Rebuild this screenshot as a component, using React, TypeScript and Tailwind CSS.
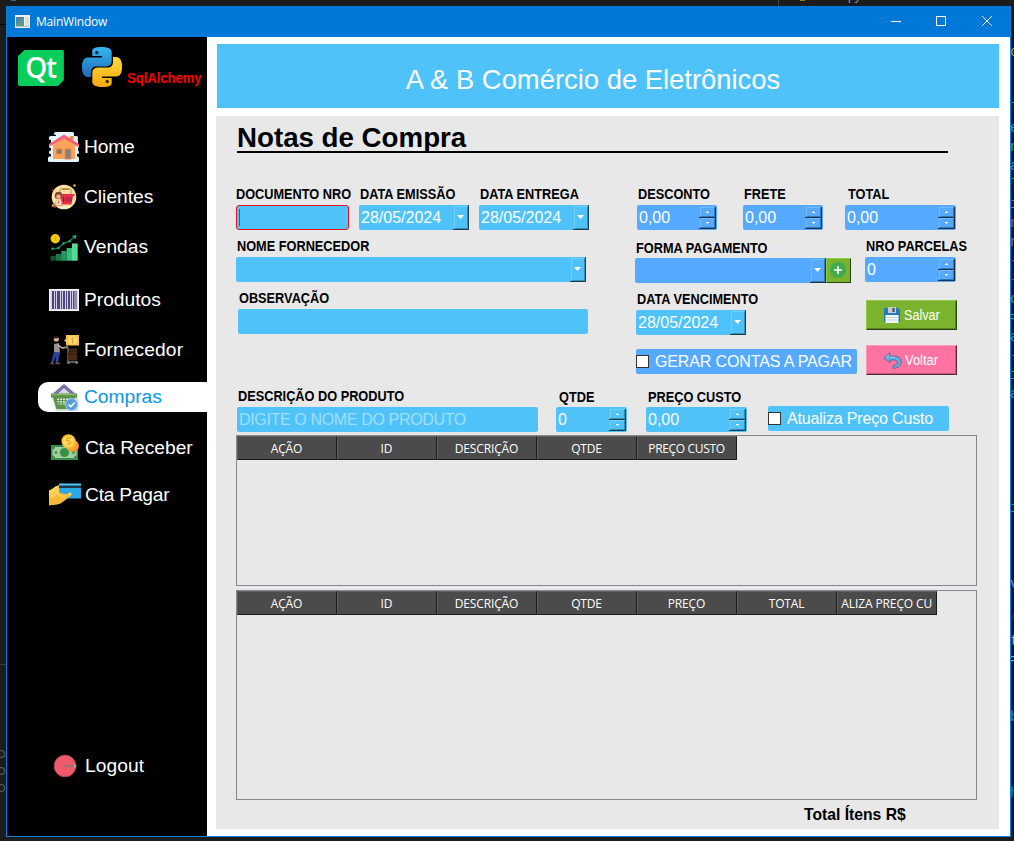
import React from "react";

const SANS = "font-['Liberation_Sans',Arial,sans-serif]";
const UI = "font-['Open_Sans','Noto_Sans',sans-serif]";

/* ---------- navigation icons ---------- */

function HomeIcon() {
  return (
    <svg width="32" height="30" viewBox="0 0 32 30">
      <g fill="#e3f4fb">
        <rect x="6" y="0" width="20" height="3" rx="1.5" />
        <rect x="8" y="2" width="18" height="4" rx="1" />
        <rect x="1" y="4" width="29" height="4" rx="1.5" />
        <rect x="3" y="8" width="27" height="5" />
        <rect x="1" y="12.500" width="30" height="3.500" rx="1.5" />
        <rect x="3" y="16" width="27" height="3" />
        <rect x="1" y="18.500" width="30" height="3.500" rx="1.5" />
        <rect x="3" y="22" width="26" height="3" />
        <rect x="0" y="24.500" width="31" height="5.500" rx="1.5" />
      </g>
      <rect x="22" y="4" width="3.5" height="7" fill="#f78b37" />
      <path d="M5 13 16 5l11 8v14H5z" fill="#fda45b" />
      <path d="M1.5 14.5 1 12 16 2.5 31 12l-.8 3L16 6.5z" fill="#fb5f7c" />
      <rect x="8.5" y="17" width="5.5" height="5" fill="#787878" stroke="#ed8c43" />
      <rect x="17" y="17" width="6" height="10" fill="#818181" stroke="#ed8c43" />
    </svg>
  );
}

function ClientesIcon() {
  return (
    <svg width="32" height="30" viewBox="0 0 32 30">
      <circle cx="16" cy="15" r="12.3" fill="#fcdfa2" />
      <path d="M9 25c5 3 12 2 15-1z" fill="#fff0cd" />
      <rect x="13.5" y="6" width="8" height="2" rx="1" fill="#c1903d" />
      <path d="M12 13V7h1.5M23 13V7h-1.5" stroke="#a47b4c" fill="none" strokeWidth=".7" />
      <path d="M12 12h14.5v2H25l-1.5 8.5H14L12 14z" fill="#e5324b" />
      <path d="M15.5 15v5M18 15v5M20.5 15v5M23 15v5" stroke="#a81732" />
      <circle cx="10.5" cy="13.5" r="3.8" fill="#874536" />
      <circle cx="10.5" cy="14.8" r="2.3" fill="#e9b090" />
      <path d="M6.5 24c0-5 2-6 4-6s4 1 4 6z" fill="#f29b62" />
      <rect x="8.5" y="18.5" width="4.5" height="4.5" fill="#fff3df" />
      <path d="M10.8 19v3" stroke="#d14343" />
      <circle cx="26.5" cy="3.5" r="1.3" fill="#edaa21" />
      <circle cx="4.5" cy="8" r="1" fill="#b61e3b" />
      <circle cx="5" cy="23.5" r="1.3" fill="#e9a735" />
      <circle cx="7" cy="25" r="1" fill="#c22c43" />
    </svg>
  );
}

function VendasIcon() {
  return (
    <svg width="32" height="30" viewBox="0 0 32 30">
      <circle cx="7.3" cy="6.7" r="4.7" fill="#f8c900" />
      <path d="m6.3 5.2 1.3-.8v4.5" stroke="#e3a900" fill="none" />
      <path d="M2.5 24h5.3v4.7H2.5z" fill="#15512f" />
      <path d="M7.8 22h5.4v6.7H7.8z" fill="#1d7745" />
      <path d="M13.2 19h5.4v9.7h-5.4z" fill="#27985d" />
      <path d="M18.6 16H24v12.7h-5.4z" fill="#34bd78" />
      <path d="M24 11.5h5.7v17.2H24z" fill="#50da96" />
      <path d="m4.5 17 6-1 5-4.500 6-2.500 5.500-4.500" stroke="#21895b" fill="none" strokeWidth="1.1" />
      <g fill="#1fae6c">
        <circle cx="4.5" cy="16.800" r="1.200" />
        <circle cx="10.500" cy="16" r="1.200" />
        <circle cx="15.500" cy="11.500" r="1.200" />
        <circle cx="21.500" cy="9.200" r="1.200" />
        <path d="m28.500 3-.8 4.500-3.700-3.700z" />
      </g>
    </svg>
  );
}

function ProdutosIcon() {
  return (
    <svg width="32" height="30" viewBox="0 0 32 30">
      <rect x="1.5" y="4.500" width="29" height="21" fill="#e6e2ee" stroke="#f7f6fa" />
      <rect x="2.500" y="5.500" width="27" height="19" fill="#d6d1e3" />
      <g fill="#4b4580">
        <rect x="4" y="6" width="2" height="18" />
        <rect x="7" y="6" width="1" height="18" />
        <rect x="9" y="6" width="3" height="18" />
        <rect x="13" y="6" width="1" height="18" />
        <rect x="15" y="6" width="2" height="18" />
        <rect x="18" y="6" width="1" height="18" />
        <rect x="20" y="6" width="2" height="18" />
        <rect x="23" y="6" width="1" height="18" />
        <rect x="25" y="6" width="1.500" height="18" />
        <rect x="27.500" y="6" width="1" height="18" />
      </g>
    </svg>
  );
}

function FornecedorIcon() {
  return (
    <svg width="32" height="30" viewBox="0 0 32 30">
      <path d="M6 9 11 8l1 10H6z" fill="#949494" />
      <circle cx="8.300" cy="4" r="2.600" fill="#dfad92" />
      <path d="M5.700 3.500c0-4 5.300-4 5.300-.5z" fill="#301c17" />
      <path d="m6 17 6 .2L10 28H7.500L8 21l-3 7H3z" fill="#2c459c" />
      <path d="M2.500 28.500H6M7.500 28.500H12" stroke="#765039" strokeWidth="1.300" />
      <path d="m10 10 4 3 6-1" stroke="#e0bba6" fill="none" strokeWidth="1.300" />
      <path d="M17 12.500 20 13v14h10" stroke="#777" fill="none" strokeWidth="1.300" />
      <path d="M21 13.500h8v12h-9v-8h1z" fill="#4c2b13" />
      <path d="M20 19h9M21 16h8" stroke="#2f180a" />
      <circle cx="20.500" cy="27.500" r="1.500" fill="#777" />
      <circle cx="28.500" cy="27.500" r="1.500" fill="#777" />
      <path d="M18 0h13v10.500H18V7l-2-1.500L18 4z" fill="#f4c64e" />
      <circle cx="24.500" cy="5.300" r="4" fill="#ffe08a" />
      <path d="M26.500 3.800c-3-2-5 .3-2 1.300s1 3.200-2 1.800M24.500 2v7" stroke="#e4aa28" fill="none" />
    </svg>
  );
}

function ComprasIcon() {
  return (
    <svg width="32" height="30" viewBox="0 0 32 30">
      <path d="M3 12 16 1.500l13 10.500 2 9-1 8H8z" fill="#d8d8de" />
      <path d="m6 13 10-9 10 9" stroke="#6458a6" fill="none" strokeWidth="3" strokeLinejoin="round" />
      <path d="m7 12 9-8 9 8" stroke="#9c92cf" fill="none" strokeWidth=".8" />
      <path d="M3 11.500h26v4H27L25 27H8.500L5 15.500H3z" fill="#5b9449" />
      <path d="M4 12.500h24" stroke="#8abe6c" strokeWidth="1.300" />
      <path d="M9 16.500h14v6H10z" fill="#e3edd6" />
      <path d="M11.500 16v7M14.500 16v7M17.500 16v7M20.500 16v7M9 18.500h14M9 21h14" stroke="#619650" strokeWidth="1" />
      <circle cx="23.500" cy="22.500" r="6" fill="#579ddd" stroke="#a6d4f6" />
      <path d="m20.500 22.500 2.200 2.100 4-4" stroke="#fff" fill="none" strokeWidth="1.500" />
    </svg>
  );
}

function ReceberIcon() {
  return (
    <svg width="32" height="30" viewBox="0 0 32 30">
      <rect x="3" y="12" width="27" height="15" fill="#388e4a" />
      <path d="M7 14h19c0 1.500 1 2.500 2.500 2.500v6c-1.500 0-2.500 1-2.500 2.500H7c0-1.500-1-2.500-2.500-2.500v-6C6 16.500 7 15.500 7 14z" fill="#9ed09d" />
      <circle cx="16.500" cy="19.500" r="4.600" fill="#398e48" />
      <circle cx="8" cy="19.500" r="1.500" fill="#46984f" />
      <circle cx="25.500" cy="19.500" r="1.500" fill="#46984f" />
      <circle cx="25" cy="13" r="6" fill="#ef8c22" />
      <circle cx="23.500" cy="12" r="6" fill="#ffa433" />
      <circle cx="20.500" cy="8.300" r="7" fill="#ffc42f" />
      <circle cx="20.500" cy="8.300" r="5.300" fill="#ffdc69" />
      <path d="M23 5h-4v3c4-1.200 5 4 0 3.300" stroke="#f3a71c" fill="none" strokeWidth="1.500" />
    </svg>
  );
}

function PagarIcon() {
  return (
    <svg width="33" height="30" viewBox="0 0 33 30">
      <path d="M11 4.500q0-1 1-1h20q1 0 1 1v14H11z" fill="#29a9e5" />
      <path d="M11 5.500h22v2.500H11z" fill="#22354a" />
      <path d="M11 4.500h22" stroke="#5cc9f4" strokeWidth="1.300" />
      <path d="M1 10.500c4-1 6-5 10-5v7l8 2c4-4 6-1 3 2l-8 6c-4 3-9 2-13 3z" fill="#f5bd36" />
      <path d="M1 10.500c4-1 6-5 10-5v7L6 17l-5 1z" fill="#ffd15a" />
      <path d="M11 12.500v3l7 1 3-3c2-1 3 .5 1 2.500" stroke="#ffd76d" fill="none" />
    </svg>
  );
}

function LogoutIcon() {
  return (
    <svg width="32" height="30" viewBox="0 0 32 30">
      <circle cx="17" cy="15" r="10.800" fill="#f05b6b" stroke="#b84756" />
      <path d="M16 15h10" stroke="#a36f70" strokeWidth="2" />
      <path d="m26 12.500 3 2.500-3 2.500z" fill="#a6a6a3" />
    </svg>
  );
}

const PYTHON_HALF =
  "M14.25.18l.9.2.73.26.59.3.45.32.34.34.25.34.16.33.1.3.04.26.02.2-.01.13V8.5l-.05.63-.13.55-.21.46-.26.38-.3.31-.33.25-.35.19-.35.14-.33.1-.3.07-.26.04-.21.02H8.77l-.69.05-.59.14-.5.22-.41.27-.33.32-.27.35-.2.36-.15.37-.1.35-.07.32-.04.27-.02.21v3.06H3.17l-.21-.03-.28-.07-.32-.12-.35-.18-.36-.26-.36-.36-.35-.46-.32-.59-.28-.73-.21-.88-.14-1.05-.05-1.23.06-1.22.16-1.04.24-.87.32-.71.36-.57.4-.44.42-.33.42-.24.4-.16.36-.1.32-.05.24-.01h.16l.06.01h8.16v-.83H6.18l-.01-2.75-.02-.37.05-.34.11-.31.17-.28.25-.26.31-.23.38-.2.44-.18.51-.15.58-.12.64-.1.71-.06.77-.04.84-.02 1.27.05z";

function PythonLogo() {
  return (
    <svg width="40" height="40" viewBox="0 0 24 24">
      <defs>
        <linearGradient id="pyBlue" x1="0" y1="0" x2="0" y2="1">
          <stop offset="0" stopColor="#35b9f0" />
          <stop offset="1" stopColor="#1e69b5" />
        </linearGradient>
        <linearGradient id="pyGold" x1="0" y1="0" x2="0" y2="1">
          <stop offset="0" stopColor="#f4a912" />
          <stop offset="1" stopColor="#ffd83c" />
        </linearGradient>
      </defs>
      <path d={PYTHON_HALF} fill="url(#pyBlue)" />
      <path d={PYTHON_HALF} fill="url(#pyGold)" transform="rotate(180 12 12)" />
      <circle cx="8.900" cy="3.300" r="1" fill="#102c42" />
      <circle cx="15.100" cy="20.700" r="1" fill="#443006" />
    </svg>
  );
}

/* ---------- window chrome ---------- */

function TitleBar() {
  return (
    <div className="flex h-[31px] shrink-0 items-center bg-[#0078d7] pl-[8px]">
      <svg width="15" height="13" viewBox="0 0 15 13">
        <rect width="15" height="13" fill="#f2f2f2" />
        <rect x="1" y="2" width="8" height="9" fill="#5a9a86" />
        <path d="M1 2h8L1 9z" fill="#5283a5" />
        <rect x="10" y="2" width="4" height="9" fill="#ddd" />
        <path d="M1 11.500h13" stroke="#bbb" />
      </svg>
      <span className={`${UI} ml-[6px] grow text-[12px] leading-4 tracking-[-0.2px] text-white`}>MainWindow</span>
      <svg width="121" height="30" viewBox="0 0 121 30" fill="none" stroke="#fff" shapeRendering="crispEdges">
        <path d="M2 14.500h10M47.500 9.500h9v9h-9z" />
        <path d="m93 9 10 10m0-10-10 10" shapeRendering="auto" />
      </svg>
    </div>
  );
}

type NavItem = { label: string; icon: React.ReactNode; gap: string; active?: boolean; text?: string };

const NAV: NavItem[] = [
  { label: "Home", icon: <HomeIcon />, gap: "", text: "tracking-[-0.200px]" },
  { label: "Clientes", icon: <ClientesIcon />, gap: "mt-[20px]" },
  { label: "Vendas", icon: <VendasIcon />, gap: "mt-[20px]" },
  { label: "Produtos", icon: <ProdutosIcon />, gap: "mt-[23px]" },
  { label: "Fornecedor", icon: <FornecedorIcon />, gap: "mt-[20px]", text: "tracking-[0.100px]" },
  { label: "Compras", icon: <ComprasIcon />, gap: "mt-[17px]", active: true },
  { label: "Cta Receber", icon: <ReceberIcon />, gap: "mt-[21px]", text: "ml-px" },
  { label: "Cta Pagar", icon: <PagarIcon />, gap: "mt-[17px]", text: "ml-px tracking-[-0.220px]" },
  { label: "Logout", icon: <LogoutIcon />, gap: "mt-[241px]", text: "ml-px tracking-[0.100px]" },
];

function Sidebar() {
  return (
    <aside className="flex w-[200px] shrink-0 flex-col bg-black">
      <div className="flex h-[95px] shrink-0 items-start pl-[11px]">
        <div className="mt-[13px] flex h-[36px] w-[46px] items-center justify-center bg-[#07ce5a] pr-px pb-[3px] [clip-path:polygon(14%_0,97%_0,100%_3%,100%_83%,87%_100%,3%_100%,0_97%,0_17%)]">
          <span className={`${UI} text-[28px] leading-none font-semibold tracking-[-1.500px] text-white`}>Qt</span>
        </div>
        <div className="mt-[10px] ml-[18px]">
          <PythonLogo />
        </div>
        <span className={`${SANS} mt-[33px] ml-[5px] origin-left scale-x-[0.930] text-[14px] leading-4 font-bold text-[#fa0000]`}>
          SqlAlchemy
        </span>
      </div>
      <nav className="flex flex-col">
        {NAV.map((n) => (
          <a
            key={n.label}
            className={`ml-[31px] flex h-[30px] items-center pl-[10px] ${n.gap} ${n.active ? "rounded-l-[10px] bg-white text-[#0a95e6]" : "text-white"}`}
          >
            <span className="w-[36px] shrink-0">{n.icon}</span>
            <span className={`${SANS} text-[19.200px] leading-[32px] whitespace-nowrap ${n.text ?? ""}`}>{n.label}</span>
          </a>
        ))}
      </nav>
    </aside>
  );
}

/* ---------- form controls ---------- */

const SKY = "bg-[#4fc3f9]";
const AZURE = "bg-[#55aaff]";

function Label({ children, className = "" }: { children: string; className?: string }) {
  return (
    <div className={`h-[22px] ${className}`}>
      <span className={`${SANS} block w-0 origin-left scale-x-[0.910] text-[14px] leading-[22px] font-bold whitespace-nowrap text-black`}>
        {children}
      </span>
    </div>
  );
}

function DropButton({ azure }: { azure?: boolean }) {
  return (
    <span className={`flex h-full w-[16px] border-r border-b pt-px pl-px ${azure ? "border-[#193451]" : "border-[#183f52]"}`}>
      <span
        className={`flex grow items-center justify-center border pr-px pb-px ${azure ? "border-t-[#72b9ff] border-r-[#3777b7] border-b-[#3777b7] border-l-[#72b9ff]" : "border-t-[#72d0fc] border-r-[#378eb5] border-b-[#378eb5] border-l-[#72d0fc]"}`}
      >
        <svg width="7" height="4" viewBox="0 0 7 4">
          <path d="M0 0h7L3.500 4z" fill="#fff" />
        </svg>
      </span>
    </span>
  );
}

function Combo({ value = "", width, azure }: { value?: string; width: string; azure?: boolean }) {
  return (
    <div className={`flex h-[25px] items-center overflow-hidden rounded-l-[2px] ${azure ? AZURE : SKY} ${width}`}>
      <span className={`${SANS} grow pl-[2px] text-[16px] leading-none text-white`}>{value}</span>
      <DropButton azure={azure} />
    </div>
  );
}

function StepButton({ up, azure }: { up?: boolean; azure?: boolean }) {
  return (
    <span className={`flex h-[11px] w-[17px] border-r border-b pl-px ${azure ? "border-[#193451]" : "border-[#183f52]"}`}>
      <span
        className={`flex grow items-center justify-center border ${azure ? "border-t-[#72b9ff] border-r-[#3777b7] border-b-[#3777b7] border-l-[#72b9ff]" : "border-t-[#72d0fc] border-r-[#378eb5] border-b-[#378eb5] border-l-[#72d0fc]"}`}
      >
        <svg width="3" height="2" viewBox="0 0 3 2" shapeRendering="crispEdges">
          <path d={up ? "M1 0h1v1h1v1H0V1h1z" : "M0 0h3v1H2v1H1V1H0z"} fill="#fff" />
        </svg>
      </span>
    </span>
  );
}

function Spin({ value, width, azure }: { value: string; width: string; azure?: boolean }) {
  return (
    <div className={`flex h-[25px] items-center rounded-[2px] pr-px ${azure ? AZURE : SKY} ${width}`}>
      <span className={`${SANS} grow pl-[2px] text-[16px] leading-none text-white`}>{value}</span>
      <span className="flex flex-col">
        <StepButton up azure={azure} />
        <StepButton azure={azure} />
      </span>
    </div>
  );
}

function Check({ label, className }: { label: string; className: string }) {
  return (
    <label className={`${SANS} flex h-[25px] items-center rounded-[2px] text-[16px] leading-none whitespace-nowrap text-white ${className}`}>
      <span className="mr-[6px] h-[13px] w-[13px] shrink-0 border border-[#333] bg-white" />
      {label}
    </label>
  );
}

function GridTable({ columns, height }: { columns: string[]; height: string }) {
  return (
    <div className={`w-[741px] shrink-0 border border-[#828790] ${height}`}>
      <div className="flex">
        {columns.map((c) => (
          <div
            key={c}
            className="flex h-[24px] w-[100px] justify-center overflow-hidden border-t border-r border-b border-l border-t-[#606060] border-r-[#1b1b1b] border-b-[#1b1b1b] border-l-[#606060] bg-[#4b4b4b] pr-[4px] pl-[3px]"
          >
            <span
              className={`${UI} flex w-full justify-center overflow-hidden text-[12px] leading-[23px] whitespace-nowrap text-white ${c.length > 15 ? "tracking-[-0.100px]" : c.length > 10 ? "tracking-[-0.350px]" : "tracking-[-0.150px]"}`}
            >
              {c}
            </span>
          </div>
        ))}
      </div>
    </div>
  );
}

/* ---------- page ---------- */

function PurchaseForm() {
  return (
    <>
      <div className="mt-[30px] flex h-[196px] shrink-0">
        <div className="flex w-[399px] shrink-0 flex-col">
          <div className="flex h-[52px] gap-[10px]">
            <div className="w-[113px]">
              <Label>DOCUMENTO NRO</Label>
              <div className={`flex h-[25px] items-center rounded-[3px] border border-[#e8101c] pl-[2px] ${SKY}`}>
                <span className="h-[17px] w-px bg-[#b03c06]" />
              </div>
            </div>
            <div>
              <Label className="pl-px">DATA EMISSÃO</Label>
              <Combo value="28/05/2024" width="w-[110px]" />
            </div>
            <div>
              <Label className="pl-px">DATA ENTREGA</Label>
              <Combo value="28/05/2024" width="w-[110px]" />
            </div>
          </div>
          <div className="h-[52px]">
            <Label className="pl-px">NOME FORNECEDOR</Label>
            <Combo width="w-[350px]" />
          </div>
          <div className="h-[52px] pl-[2px]">
            <Label className="pl-px">OBSERVAÇÃO</Label>
            <div className={`h-[25px] w-[350px] rounded-[2px] ${SKY}`} />
          </div>
        </div>

        <div className="flex flex-col">
          <div className="flex h-[52px] pl-[2px]">
            <div className="w-[106px]">
              <Label className="pl-px">DESCONTO</Label>
              <Spin azure value="0,00" width="w-[80px]" />
            </div>
            <div className="w-[102px]">
              <Label className="pl-px">FRETE</Label>
              <Spin azure value="0,00" width="w-[80px]" />
            </div>
            <div>
              <Label className="pl-[3px]">TOTAL</Label>
              <Spin azure value="0,00" width="w-[111px]" />
            </div>
          </div>
          <div className="flex">
            <div className="w-[230px] pt-px">
              <Label className="pt-px pl-px">FORMA PAGAMENTO</Label>
              <div className="flex">
                <Combo azure width="w-[191px]" />
                <button className="flex h-[25px] w-[25px] items-center justify-center border border-t-[#93cc47] border-r-[#2a410e] border-b-[#2a410e] border-l-[#93cc47] bg-[#7ab42f] pr-[2px] pb-px">
                  <svg width="16" height="16" viewBox="0 0 16 16">
                    <circle cx="8" cy="8" r="8" fill="#43ab4d" />
                    <path d="M8 4v8M4 8h8" stroke="#fff" strokeWidth="1.600" />
                  </svg>
                </button>
              </div>
              <div className="mt-[5px] pl-px">
                <Label className="pl-px">DATA VENCIMENTO</Label>
                <Combo value="28/05/2024" width="w-[110px]" />
              </div>
              <Check label="GERAR CONTAS A PAGAR" className="mt-[14px] ml-px w-[221px] bg-[#55aaff] tracking-[-0.130px]" />
            </div>
            <div>
              <Label className="pl-px">NRO PARCELAS</Label>
              <Spin azure value="0" width="w-[91px]" />
              <button className={`${SANS} mt-[18px] ml-px flex h-[30px] w-[91px] items-center border border-t-[#93cc47] border-r-[#2a410e] border-b-[#2a410e] border-l-[#93cc47] bg-[#7ab42f] pl-[17px] text-[14px] text-white shadow-[inset_-1px_-1px_0_#5b8723]`}>
                <svg width="16" height="16" viewBox="0 0 16 16">
                  <path d="M0 1h14l2 2v12H0z" fill="#2879b8" />
                  <rect x="4" y="0" width="8" height="6" fill="#c7cbd0" />
                  <rect x="8.500" y="1" width="2" height="4" fill="#39424a" />
                  <rect x="1.500" y="8" width="13" height="8" fill="#f2f5f8" />
                  <path d="M3 10.500h10M3 13h10" stroke="#c8d4dd" />
                </svg>
                <span className="ml-[4px] origin-left scale-x-[0.900] pt-px">Salvar</span>
              </button>
              <button className={`${SANS} mt-[15px] ml-px flex h-[30px] w-[91px] items-center border border-t-[#ff98ba] border-r-[#5a293a] border-b-[#5a293a] border-l-[#ff98ba] bg-[#ff73a3] pl-[16px] text-[14px] text-white shadow-[inset_-1px_-1px_0_#bf567a]`}>
                <svg width="19" height="17" viewBox="0 0 19 17">
                  <path
                    d="M7 .8 1 5.800l6 5V8h4c5 0 4.500 5.500-1 5.500v2.700c10 .5 11-12 2-12H7z"
                    fill="#62acec"
                    stroke="#536687"
                    strokeWidth=".9"
                    strokeLinejoin="round"
                  />
                  <path d="m3 5.500 3-2.700M7 5.300h5" stroke="#a4d7ff" fill="none" />
                </svg>
                <span className="ml-[3px] origin-left scale-x-[0.920] pt-px">Voltar</span>
              </button>
            </div>
          </div>
        </div>
      </div>

      <div className="mt-[5px] flex h-[51px] shrink-0 pl-px">
        <div className="mt-px w-[319px]">
          <Label className="pl-px">DESCRIÇÃO DO PRODUTO</Label>
          <div className={`${SANS} flex h-[25px] w-[301px] items-center rounded-[2px] pl-[2px] text-[16px] leading-none tracking-[-0.350px] whitespace-nowrap text-[#a1dffb] ${SKY}`}>
            DIGITE O NOME DO PRODUTO
          </div>
        </div>
        <div className="mt-px w-[90px]">
          <Label className="pt-px pl-[3px]">QTDE</Label>
          <Spin value="0" width="w-[71px]" />
        </div>
        <div className="mt-px w-[122px]">
          <Label className="pt-px pl-[2px]">PREÇO CUSTO</Label>
          <Spin value="0,00" width="w-[101px]" />
        </div>
        <Check label="Atualiza Preço Custo" className="mt-[22px] w-[181px] bg-[#4fc3f9] tracking-[-0.170px]" />
      </div>
    </>
  );
}

/* ---------- editor showing behind the window ---------- */

const EDGE: [string, string][] = [
  ["o", "text-[#a58a55]"], ["", ""], ["", ""], ["l", "text-[#3fa05f]"], ["e", "text-[#2f9a8a]"], ["n", "text-[#2f9a8a]"],
  ["a", "text-[#2f9a8a]"], ["l", "text-[#3fa05f]"], ["i", "text-[#c0627c]"], ["n", "text-[#a0589a]"], ["n", "text-[#a0589a]"],
  ["-", "text-[#a0589a]"], ["-", "text-[#2f9a8a]"], ["o", "text-[#2f9a8a]"], ["=", "text-[#2f9a8a]"], ["a", "text-[#2f9a8a]"],
  ["-", "text-[#2f9a8a]"], ["i", "text-[#3fa05f]"], ["a", "text-[#2f9a8a]"], ["", ""], ["", ""], ["", ""], ["", ""], ["", ""],
  ["i", "text-[#2f9a8a]"], ["", ""], ["", ""], ["", ""], ["v", "text-[#6a92d0]"], ["", ""], ["'", "text-[#b5a78b]"],
  ["t", "text-[#b5a78b]"], ["=", "text-[#6fa8d0]"], ["", ""], ["", ""], ["b", "text-[#1687a8]"], ["", ""], ["", ""], ["", ""],
  ["h", "text-[#16879a]"],
];

export default function App() {
  return (
    <div className="flex h-[841px] w-[1014px] flex-col overflow-hidden bg-[#1c1c1c]">
      <div className="flex h-[6px] shrink-0 items-start">
        <span className="ml-[11px] h-px w-[5px] bg-[#37688d]" />
        <span className="ml-[762px] h-[6px] w-px bg-[#444]" />
        <span className="ml-[21px] h-px w-[5px] bg-[#92801e]" />
        <span className="-mt-[10px] ml-[43px] font-['Liberation_Sans',sans-serif] text-[12px] leading-[12px] text-[#839cad]">
          py
        </span>
      </div>
      <div className="flex h-[831px] shrink-0">
        <div className="flex w-[6px] shrink-0 flex-col overflow-hidden">
          <span className="mt-[18px] h-px w-full shrink-0 bg-[#050505]" />
          <span className="mt-[639px] h-px w-full shrink-0 bg-[#3b3b3b]" />
          <span className="mt-[85px] -ml-[2px] h-[8px] w-[7px] shrink-0 rounded-full border border-[#707070]" />
          <span className="mt-[9px] -ml-[2px] h-[8px] w-[7px] shrink-0 rounded-full border border-[#707070]" />
          <span className="mt-[9px] -ml-[2px] h-[8px] w-[7px] shrink-0 rounded-full border border-[#707070]" />
        </div>
        <div className="flex w-[1005px] shrink-0 flex-col border border-t-0 border-[#0f7fdb] bg-white">
          <TitleBar />
          <div className="flex min-h-0 grow">
            <Sidebar />
            <main className="flex w-[792px] shrink-0 flex-col pt-[7px] pl-[9px]">
              <header className="ml-px flex h-[64px] w-[782px] shrink-0 items-center justify-center bg-[#4fc3f9] pt-[7px] pr-[30px]">
                <h1 className={`${SANS} text-[27.400px] leading-none whitespace-nowrap text-white`}>A &amp; B Comércio de Eletrônicos</h1>
              </header>
              <section className="mt-[8px] flex h-[713px] w-[783px] shrink-0 flex-col bg-[#e8e8e8] pl-[20px]">
                <h2 className={`${SANS} ml-px h-[37px] w-[711px] shrink-0 border-b-2 border-black pt-[4px] text-[27.700px] leading-[35px] font-bold text-black`}>
                  Notas de Compra
                </h2>
                <PurchaseForm />
                <div className="flex flex-col gap-[4px]">
                  <GridTable columns={["AÇÃO", "ID", "DESCRIÇÃO", "QTDE", "PREÇO CUSTO"]} height="h-[151px]" />
                  <GridTable
                    columns={["AÇÃO", "ID", "DESCRIÇÃO", "QTDE", "PREÇO", "TOTAL", "ATUALIZA PREÇO CUSTO"]}
                    height="h-[210px]"
                  />
                </div>
                <div className={`${SANS} pl-[568px] text-[15.700px] leading-[29px] font-bold whitespace-nowrap text-black`}>
                  Total Ítens R$
                </div>
              </section>
            </main>
          </div>
        </div>
        <div className="flex w-[3px] shrink-0 flex-col overflow-hidden bg-[#171717] pt-[37px] font-['Liberation_Mono',monospace] text-[15px] leading-[19px]">
          {EDGE.map(([ch, color], i) => (
            <span key={i} className={`-ml-[1px] h-[19px] shrink-0 ${color}`}>
              {ch}
            </span>
          ))}
        </div>
      </div>
    </div>
  );
}
